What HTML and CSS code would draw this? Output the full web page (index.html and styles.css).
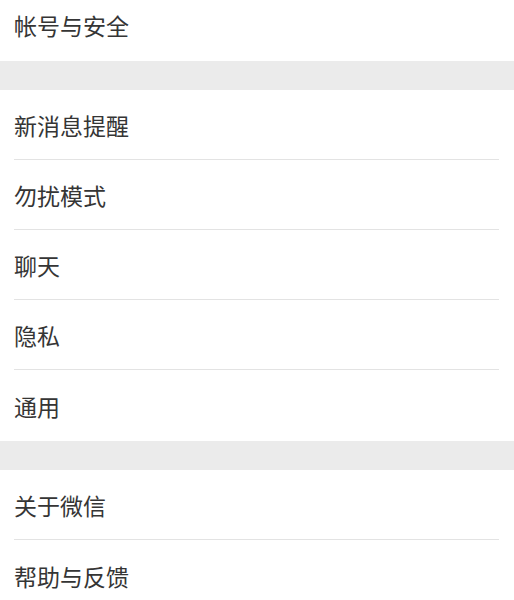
FILE: index.html
```html
<!DOCTYPE html>
<html>

<head>
	<meta charset="utf-8" />
	<meta name="viewport" content="width=device-width">
	<link rel="stylesheet" href="styles.css">
</head>

<body>
	<div class="settings">
		<div class="group">
			<div class="cell cell-first"><span class="label">帐号与安全</span></div>
		</div>

		<div class="gap"></div>

		<div class="group">
			<div class="cell"><span class="label">新消息提醒</span></div>
			<div class="cell"><span class="label">勿扰模式</span></div>
			<div class="cell"><span class="label">聊天</span></div>
			<div class="cell"><span class="label">隐私</span></div>
			<div class="cell"><span class="label">通用</span></div>
		</div>

		<div class="gap"></div>

		<div class="group">
			<div class="cell"><span class="label">关于微信</span></div>
			<div class="cell"><span class="label">帮助与反馈</span></div>
		</div>
	</div>
</body>

</html>
```

FILE: styles.css
```css
body {
	margin: 0;
	background-color: #ffffff;
	font-family: "Noto Sans CJK SC", "Noto Sans", sans-serif;
	color: #353535;
	overflow: hidden;
}

.settings {
	display: flex;
	flex-direction: column;
}

.group {
	display: flex;
	flex-direction: column;
	background-color: #ffffff;
}

.gap {
	height: 29px;
	background-color: #ebebeb;
}

.cell {
	display: flex;
	align-items: center;
	height: 70px;
	padding-top: 2px;
	margin: 0 15px 0 14px;
	box-sizing: border-box;
	border-bottom: 1px solid #e3e3e3;
}

.group .cell:last-child {
	border-bottom: none;
	height: 71px;
}

.cell-first,
.group .cell-first:last-child {
	height: 61px;
	padding-top: 0;
	padding-bottom: 10px;
}

.label {
	font-size: 23px;
	line-height: 1;
}
```
